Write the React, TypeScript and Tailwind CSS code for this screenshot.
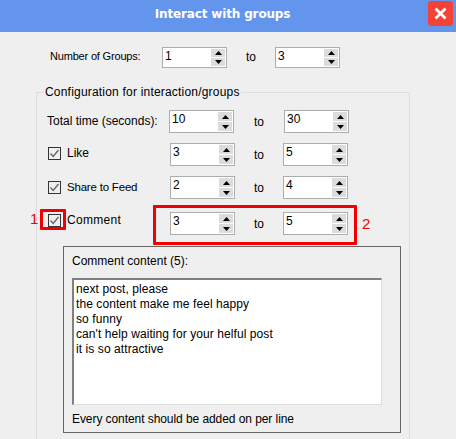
import { Fragment } from "react";

const FONT = "font-['Liberation_Sans',sans-serif]";
const LINES = [
  "next post, please",
  "the content make me feel happy",
  "so funny",
  "can't help waiting for your helful post",
  "it is so attractive",
];

function Spinner({ value, h = "h-[23px]" }: { value: string; h?: string }) {
  return (
    <div className={`flex w-[65px] ${h} items-stretch border border-[#adadad] bg-white`}>
      <span className="flex-1 pl-[2px] text-[12px] leading-[17px] text-black">{value}</span>
      <div className="my-[1px] mr-[1px] flex w-[14px] flex-col gap-[1px]">
        <span className="flex flex-1 items-center justify-center bg-[#dcdcdc]">
          <svg width="7" height="4" viewBox="0 0 7 4"><path d="M3.5 0L7 4H0z" fill="#000" /></svg>
        </span>
        <span className="flex flex-1 items-center justify-center bg-[#dcdcdc]">
          <svg width="7" height="4" viewBox="0 0 7 4"><path d="M0 0h7L3.5 4z" fill="#000" /></svg>
        </span>
      </div>
    </div>
  );
}

function Range({ from, to, h, toClass = "w-[48px]" }: { from: string; to: string; h?: string; toClass?: string }) {
  return (
    <Fragment>
      <Spinner value={from} h={h} />
      <span className={`text-center text-[12px] text-black ${toClass}`}>to</span>
      <Spinner value={to} h={h} />
    </Fragment>
  );
}

function Check() {
  return (
    <span className="flex h-[13px] w-[13px] items-center justify-center border border-[#333] bg-[#efefef]">
      <svg width="11" height="11" viewBox="0 0 11 11" fill="none">
        <path d="M1.5 5.5L4.2 8.5L9.5 2" stroke="#666" strokeWidth="1.4" />
      </svg>
    </span>
  );
}

function CheckRow({ label, from, to, className, labelTop, labelClass = "text-[12px]" }: { label: string; from: string; to: string; className: string; labelTop: string; labelClass?: string }) {
  return (
    <div className={`flex items-center ${className}`}>
      <div className={`flex w-[123px] items-center gap-[6px] self-start pl-[1px] leading-[14px] text-black ${labelTop}`}>
        <Check />
        <span className={labelClass}>{label}</span>
      </div>
      <Range from={from} to={to} />
    </div>
  );
}

export default function App() {
  return (
    <div className={`relative h-[439px] w-[456px] overflow-hidden bg-[#efefef] ${FONT}`}>
      {/* title bar */}
      <div className="relative flex h-8 items-center justify-center bg-[#6495ed] pb-[4px] pr-[11px]">
        <span className="font-['DejaVu_Sans',sans-serif] text-[12px] font-bold tracking-[-0.15px] text-white">Interact with groups</span>
        <span className="absolute left-[428px] top-[1px] flex h-[25px] w-[25px] items-center justify-center rounded-[3px] bg-[#f44336]">
          <svg width="13" height="13" viewBox="0 0 13 13"><path d="M1.5 1.5L11.5 11.5M11.5 1.5L1.5 11.5" stroke="#fff" strokeWidth="2.8" /></svg>
        </span>
      </div>

      <div className="mt-[15px] flex items-center pl-[50px]">
        <span className="mb-[2px] w-[112px] text-[11px] tracking-[-0.18px] text-black">Number of Groups:</span>
        <Range from="1" to="3" h="h-[21px]" toClass="mb-[2px] w-[48px]" />
      </div>

      {/* group box */}
      <div className="relative ml-[36px] mt-[24px] h-[400px] w-[374px] border border-[#dcdcdc] pl-[10px] pt-[17px]">
        <span className="absolute left-[7px] top-[-9px] bg-[#efefef] px-[1px] text-[12px] leading-[17px] tracking-[0.2px] text-black">
          Configuration for interaction/groups
        </span>
        <div className="flex items-center">
          <span className="mb-[1px] w-[122px] text-[12px] text-black">Total time (seconds):</span>
          <Range from="10" to="30" toClass="w-[50px]" />
        </div>
        <CheckRow label="Like" from="3" to="5" className="mt-[10px]" labelTop="mt-[3px]" />
        <CheckRow label="Share to Feed" from="2" to="4" className="mt-[10px]" labelTop="mt-[4px]" labelClass="text-[11.5px] tracking-[-0.2px]" />
        <CheckRow label="Comment" from="3" to="5" className="mt-[13px]" labelTop="mt-[1px]" labelClass="text-[12px] tracking-[0.3px]" />

        {/* comment box */}
        <div className="ml-[16px] mt-[11px] h-[187px] w-[338px] border border-[#666] px-[8px]">
          <div className="pt-[5px] text-[12px] leading-[18px] text-black">Comment content (5):</div>
          <div className="mt-[8px] h-[127px] w-[310px] border border-[#ddd] border-l-2 border-t-2 border-l-[#808080] border-t-[#808080] bg-white pl-[2px] pt-[2px]">
            {LINES.map(l => (
              <div key={l} className="text-[12px] leading-[15px] tracking-[0.08px] text-black">{l}</div>
            ))}
          </div>
          <div className="mt-[5px] text-[12px] leading-[18px] tracking-[-0.07px] text-black">Every content should be added on per line</div>
        </div>
      </div>

      {/* red annotations */}
      <div className="absolute left-[40px] top-[209px] h-[21px] w-[26px] rounded-[1px] border-[3px] border-[#f00000]" />
      <div className="absolute left-[153px] top-[205px] h-[40px] w-[204px] rounded-[1px] border-[3px] border-[#f00000]" />
      <span className="absolute left-[30px] top-[210px] text-[15px] leading-[18px] text-[#f00000]">1</span>
      <span className="absolute left-[362px] top-[215px] text-[15px] leading-[18px] text-[#f00000]">2</span>
    </div>
  );
}
